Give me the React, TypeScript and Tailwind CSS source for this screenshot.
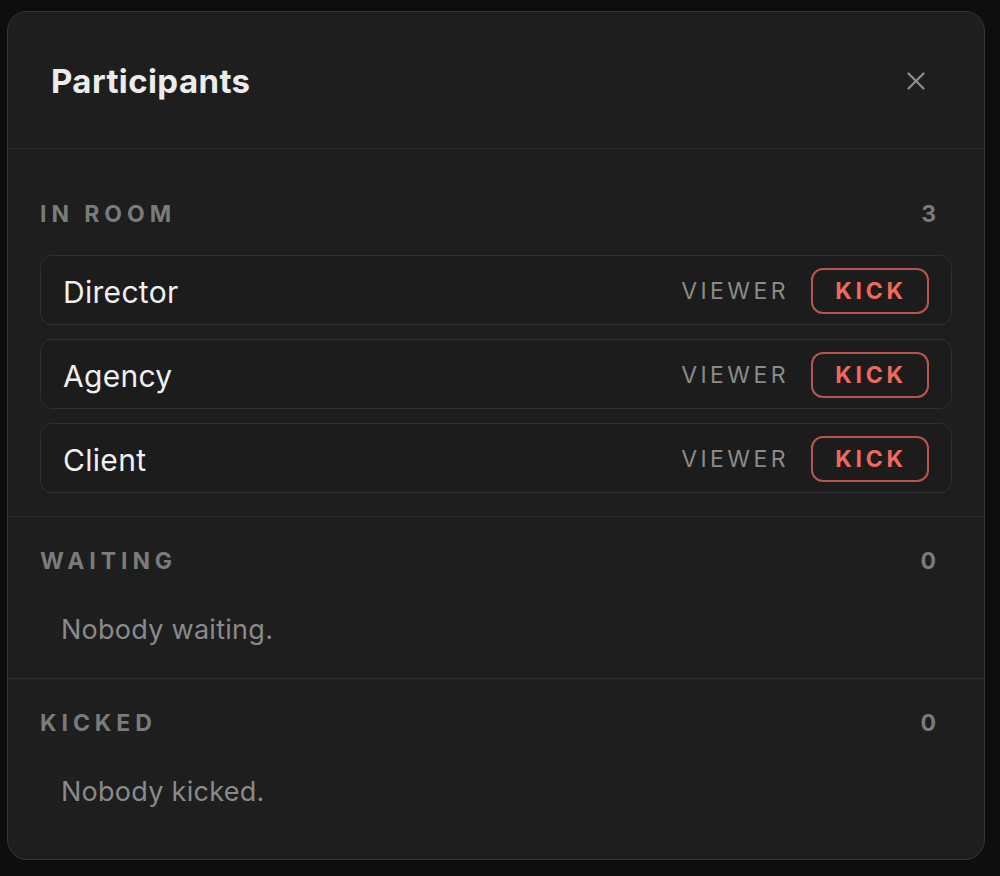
import { X } from 'lucide-react'

interface Participant {
  id: string
  name: string
  role: string
}

const inRoom: Participant[] = [
  { id: 'p1', name: 'Director', role: 'VIEWER' },
  { id: 'p2', name: 'Agency', role: 'VIEWER' },
  { id: 'p3', name: 'Client', role: 'VIEWER' },
]

function SectionHeader({ label, count }: { label: string; count: number }) {
  return (
    <div className="flex items-center justify-between pr-[16px] h-[28px]">
      <span className="text-[23px] font-bold tracking-[0.215em] text-[#7b7b7b] leading-none">{label}</span>
      <span className="text-[23px] font-bold text-[#7b7b7b] leading-none">{count}</span>
    </div>
  )
}

export default function App() {
  return (
    <div
      className="min-h-[876px] bg-[#0e0e0e] pt-[11px] pl-[7px] pr-[15px] pb-[16px]"
      style={{ fontFamily: 'Inter, "Noto Sans", sans-serif' }}
    >
      <div className="w-[978px] h-[849px] rounded-[20px] border border-[#353535] bg-[#1e1e1e] overflow-hidden flex flex-col">
        <div className="flex items-center justify-between h-[137px] pl-[43px] pr-[53px] border-b border-[#2e2e2e]">
          <h1 className="text-[33px] font-bold text-[#ececec] tracking-[0.012em] pt-[3px]">Participants</h1>
          <button className="text-[#8c8c8c] pt-[1px]">
            <X size={30} strokeWidth={1.8} />
          </button>
        </div>

        <section className="px-[32px] pt-[51px] pb-[23px] border-b border-[#2e2e2e]">
          <SectionHeader label="IN ROOM" count={inRoom.length} />
          <div className="mt-[27px] flex flex-col gap-[14px]">
            {inRoom.map(p => (
              <div
                key={p.id}
                className="h-[70px] rounded-[12px] border border-[#303030] bg-[#1c1c1c] flex items-center justify-between pl-[22px] pr-[22px]"
              >
                <span className="text-[30px] text-[#f0f0f0] tracking-[0.01em] pt-[4px]">{p.name}</span>
                <div className="flex items-center gap-[22px] pt-[2px]">
                  <span className="text-[23px] tracking-[0.15em] text-[#8a8a8a]">{p.role}</span>
                  <button className="h-[46px] w-[118px] rounded-[12px] border-2 border-[#b9564c] text-[#f2695b] text-[23px] font-bold tracking-[0.16em] flex items-center justify-center pl-[2px]">
                    KICK
                  </button>
                </div>
              </div>
            ))}
          </div>
        </section>

        <section className="px-[32px] pt-[30px] border-b border-[#2e2e2e] h-[162px]">
          <SectionHeader label="WAITING" count={0} />
          <p className="mt-[37px] pl-[21px] text-[27px] text-[#8a8a8a] leading-[36px] tracking-[0.01em]">Nobody waiting.</p>
        </section>

        <section className="px-[32px] pt-[30px]">
          <SectionHeader label="KICKED" count={0} />
          <p className="mt-[37px] pl-[21px] text-[27px] text-[#8a8a8a] leading-[36px] tracking-[0.01em]">Nobody kicked.</p>
        </section>
      </div>
    </div>
  )
}
